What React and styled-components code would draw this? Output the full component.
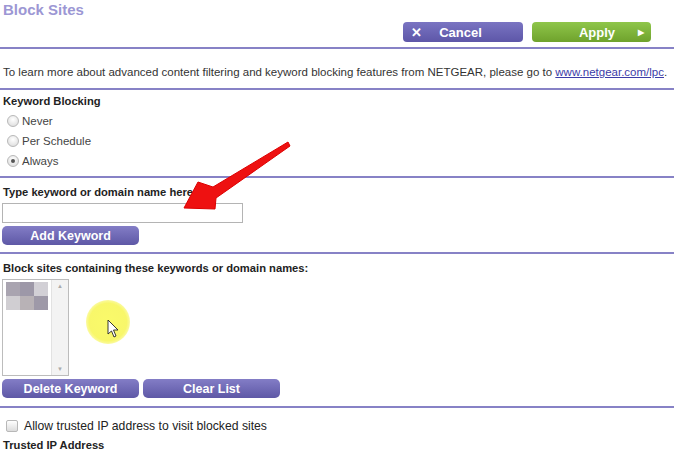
import React from 'react'
import styled, { createGlobalStyle } from 'styled-components'

const Global = createGlobalStyle`
  html, body {
    margin: 0;
    background: #fff;
    font-family: "Liberation Sans", Arial, sans-serif;
    color: #2a2a2a;
  }
`

const Page = styled.div`
  position: relative;
  width: 674px;
  height: 457px;
  overflow: hidden;
  background: #fff;
`

const Header = styled.header`
  height: 47px;
  display: flex;
  justify-content: space-between;
  align-items: flex-start;
  padding: 0 23px 0 3px;
  border-bottom: 2px solid #8782c6;
`

const Title = styled.h1`
  margin: 1px 0 0;
  font-size: 15px;
  font-weight: bold;
  color: #9c97d4;
`

const Actions = styled.div`
  display: flex;
  gap: 9px;
  margin-top: 22px;
`

const TopButton = styled.button`
  width: ${p => p.$w}px;
  height: 20px;
  border: none;
  border-radius: 4px;
  display: flex;
  align-items: center;
  justify-content: space-between;
  padding: 0 ${p => p.$pr}px 0 ${p => p.$pl}px;
  font-family: inherit;
  font-size: 13px;
  font-weight: bold;
  color: #fff;
  background: ${p => (p.$green ? 'linear-gradient(#8fc64a, #6fa22c)' : 'linear-gradient(#7a74c2, #5d56a8)')};
`

const Spacer = styled.span`
  width: ${p => p.$w}px;
`

const Section = styled.section`
  padding: ${p => p.$pad};
  border-bottom: ${p => (p.$last ? 'none' : '2px solid #8782c6')};
  display: flex;
  flex-direction: column;
  align-items: flex-start;
`

const Intro = styled.p`
  margin: 0;
  font-size: 11.5px;
  line-height: 14px;
  color: #333;
  & a {
    color: #3c3ca8;
    text-decoration: underline;
  }
`

const Label = styled.div`
  font-size: 11.2px;
  line-height: 14px;
  font-weight: bold;
  color: #222;
  margin: ${p => p.$m || '0'};
`

const Option = styled.label`
  display: flex;
  align-items: center;
  height: 20px;
  margin-top: ${p => p.$mt || 0}px;
  font-size: ${p => p.$fs || 11.5}px;
  color: #444;
`

const Radio = styled.span`
  width: 10px;
  height: 10px;
  border-radius: 50%;
  border: 1px solid #b8b8b8;
  background: radial-gradient(circle at 50% 35%, #fff, #d8d8d8);
  display: flex;
  align-items: center;
  justify-content: center;
  margin: 0 3px 0 4px;
  &::after {
    content: '';
    width: 4px;
    height: 4px;
    border-radius: 50%;
    background: ${p => (p.$on ? '#555' : 'transparent')};
  }
`

const TextBox = styled.div`
  width: 239px;
  height: 18px;
  border: 1px solid #b4b4b4;
  margin-top: 4px;
`

const Pill = styled.button`
  width: 137px;
  height: 19px;
  border: none;
  border-radius: 5px;
  font-family: inherit;
  font-size: 12.5px;
  font-weight: bold;
  color: #fff;
  background: linear-gradient(#837dc6, #5e58a6);
  padding: 0;
`

const ButtonRow = styled.div`
  display: flex;
  gap: 4px;
  margin-top: ${p => p.$mt}px;
`

const ListBox = styled.div`
  width: 65px;
  height: 95px;
  border: 1px solid #bcbcbc;
  margin-top: 4px;
  display: flex;
`

const ListItems = styled.div`
  flex: 1;
  padding: 2px 0 0 3px;
  display: grid;
  grid-template-columns: repeat(3, 14px);
  grid-auto-rows: 14px;
  align-content: start;
`

const Tile = styled.span`
  background: ${p => p.$c};
`

const Scroll = styled.div`
  width: 16px;
  background: #f3f3f3;
  border-left: 1px solid #e2e2e2;
  display: flex;
  flex-direction: column;
  justify-content: space-between;
  align-items: center;
  padding: 3px 0;
  font-size: 6px;
  color: #aaa;
`

const Check = styled.span`
  width: 10px;
  height: 10px;
  border: 1px solid #b8b8b8;
  border-radius: 2px;
  background: linear-gradient(#fff, #dcdcdc);
  margin: 0 6px 0 4px;
`

const CheckText = styled.span`
  color: #222;
`

const Overlay = styled.svg`
  position: absolute;
  left: 0;
  top: 0;
  pointer-events: none;
`

const tiles = ['#a9a4b0', '#9d98a8', '#d2d0d6', '#d0ced2', '#b8b2b6', '#9e99a8']

export default function App() {
  return (
    <Page>
      <Global />
      <Header>
        <Title>Block Sites</Title>
        <Actions>
          <TopButton $w={120} $pl={8} $pr={10}>
            <span>✕</span>
            <span>Cancel</span>
            <Spacer $w={14} />
          </TopButton>
          <TopButton $w={119} $green $pl={10} $pr={7}>
            <Spacer $w={14} />
            <span>Apply</span>
            <span style={{ fontSize: 8 }}>▶</span>
          </TopButton>
        </Actions>
      </Header>

      <Section $pad="16px 3px 9px">
        <Intro>
          To learn more about advanced content filtering and keyword blocking features from NETGEAR, please go to{' '}
          <a href="#">www.netgear.com/lpc</a>.
        </Intro>
      </Section>

      <Section $pad="4px 3px 5px">
        <Label>Keyword Blocking</Label>
        <Option $mt={3}>
          <Radio /> Never
        </Option>
        <Option>
          <Radio /> Per Schedule
        </Option>
        <Option>
          <Radio $on /> Always
        </Option>
      </Section>

      <Section $pad="7px 2px 7px">
        <Label $m="0 0 0 1px">Type keyword or domain name here.</Label>
        <TextBox />
        <ButtonRow $mt={3}>
          <Pill>Add Keyword</Pill>
        </ButtonRow>
      </Section>

      <Section $pad="7px 2px 8px">
        <Label $m="0 0 0 1px">Block sites containing these keywords or domain names:</Label>
        <ListBox>
          <ListItems>
            {tiles.map((c, i) => (
              <Tile key={i} $c={c} />
            ))}
          </ListItems>
          <Scroll>
            <span>▲</span>
            <span>▼</span>
          </Scroll>
        </ListBox>
        <ButtonRow $mt={3}>
          <Pill>Delete Keyword</Pill>
          <Pill>Clear List</Pill>
        </ButtonRow>
      </Section>

      <Section $pad="8px 2px 0" $last>
        <Option $fs={12.2}>
          <Check />
          <CheckText>Allow trusted IP address to visit blocked sites</CheckText>
        </Option>
        <Label $m="2px 0 0 1px">Trusted IP Address</Label>
      </Section>

      <Overlay width="674" height="457" viewBox="0 0 674 457">
        <defs>
          <radialGradient id="glow" cx="50%" cy="50%" r="50%">
            <stop offset="0%" stopColor="#fafa6a" />
            <stop offset="85%" stopColor="#f8f76a" />
            <stop offset="100%" stopColor="#fbfaa0" />
          </radialGradient>
        </defs>
        <circle cx="108" cy="322" r="22" fill="url(#glow)" />
        <path
          d="M108 320 L108 334 L111.5 331 L114 337 L116 336 L113.5 330 L118 330 Z"
          fill="#fff"
          stroke="#222"
          strokeWidth="0.9"
          strokeLinejoin="round"
        />
        <path
          d="M290 146 L288 142 L213 187 L198 182 L184 208 L215 209 L216 198 Z"
          fill="#ee1111"
          stroke="#dd0000"
          strokeWidth="1"
          strokeLinejoin="round"
        />
      </Overlay>
    </Page>
  )
}
